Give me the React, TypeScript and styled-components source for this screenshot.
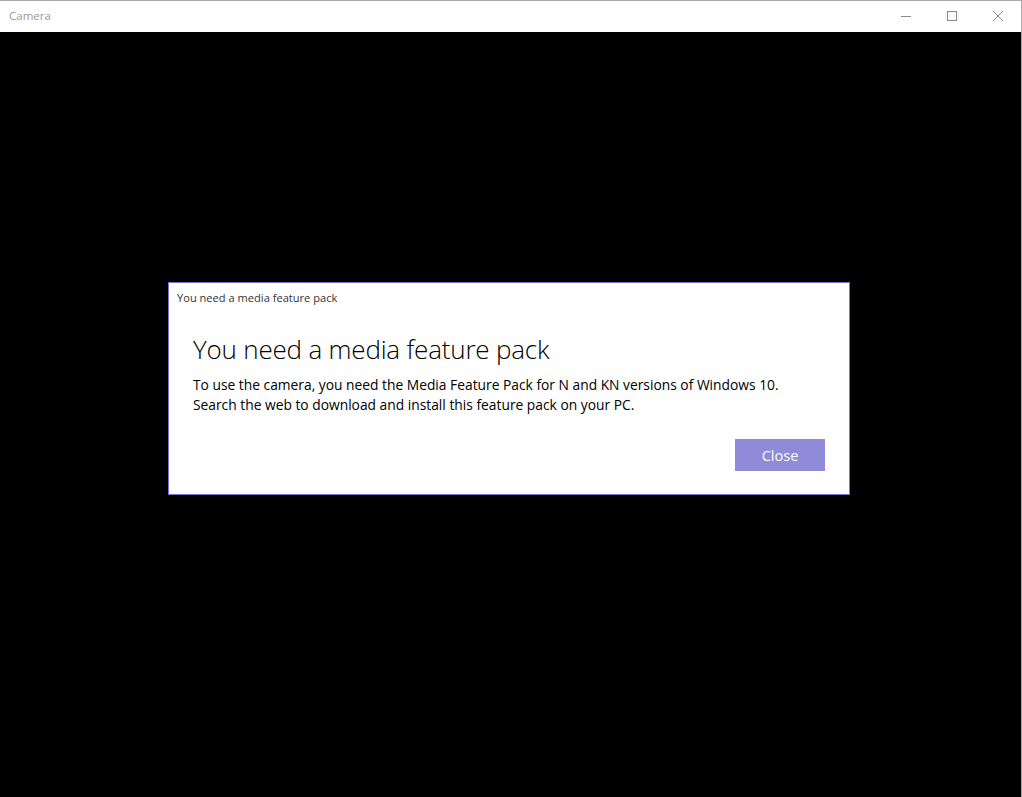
import React from 'react';
import styled, { createGlobalStyle } from 'styled-components';

const GlobalStyle = createGlobalStyle`
  html, body {
    margin: 0;
    padding: 0;
    background: #000;
  }
  body {
    font-family: 'Open Sans', 'Noto Sans', sans-serif;
  }
`;

const App: React.FC = () => {
  return (
    <>
      <GlobalStyle />
      <Window>
        <TitleBar>
          <AppTitle>Camera</AppTitle>
          <Controls>
            <ControlButton aria-label="Minimize">
              <svg width="10" height="10" viewBox="0 0 10 10">
                <line x1="0" y1="5.5" x2="10" y2="5.5" stroke="#8a8a8a" strokeWidth="1" />
              </svg>
            </ControlButton>
            <ControlButton aria-label="Maximize">
              <svg width="10" height="10" viewBox="0 0 10 10">
                <rect x="0.5" y="0.5" width="9" height="9" fill="none" stroke="#8a8a8a" strokeWidth="1" />
              </svg>
            </ControlButton>
            <ControlButton aria-label="Close">
              <svg width="10" height="10" viewBox="0 0 10 10">
                <path d="M0 0 L10 10 M10 0 L0 10" stroke="#8a8a8a" strokeWidth="1" />
              </svg>
            </ControlButton>
          </Controls>
        </TitleBar>
        <Content>
          <Dialog>
            <Caption>You need a media feature pack</Caption>
            <DialogBody>
              <Heading>You need a media feature pack</Heading>
              <Message>
                To use the camera, you need the Media Feature Pack for N and KN versions of Windows 10.
                <br />
                Search the web to download and install this feature pack on your PC.
              </Message>
              <Actions>
                <PrimaryButton>Close</PrimaryButton>
              </Actions>
            </DialogBody>
          </Dialog>
        </Content>
      </Window>
    </>
  );
};

const Window = styled.div`
  display: flex;
  flex-direction: column;
  width: 1022px;
  height: 797px;
  box-sizing: border-box;
  border-top: 1px solid #aaaaaa;
  border-right: 1px solid #aaaaaa;
  overflow: hidden;
`;

const TitleBar = styled.div`
  display: flex;
  align-items: center;
  justify-content: space-between;
  height: 31px;
  background: #ffffff;
  flex-shrink: 0;
`;

const AppTitle = styled.span`
  padding-left: 9px;
  font-family: 'Open Sans', sans-serif;
  font-size: 11.5px;
  color: #9a9a9a;
  margin-top: -2px;
`;

const Controls = styled.div`
  display: flex;
  height: 100%;
`;

const ControlButton = styled.div`
  display: flex;
  align-items: center;
  justify-content: center;
  width: 46px;
  height: 100%;
  padding-bottom: 1px;
  box-sizing: border-box;
`;

const Content = styled.div`
  flex: 1;
  background: #000000;
  display: flex;
  align-items: flex-start;
  padding: 250px 0 0 168px;
`;

const Dialog = styled.div`
  width: 682px;
  box-sizing: border-box;
  background: #ffffff;
  border: 1px solid #7873d6;
`;

const Caption = styled.div`
  height: 30px;
  line-height: 30px;
  padding-left: 8px;
  font-size: 11.1px;
  color: #333333;
`;

const DialogBody = styled.div`
  display: flex;
  flex-direction: column;
  padding: 20px 24px 23px 24px;
`;

const Heading = styled.h1`
  margin: 0;
  font-family: 'Open Sans', sans-serif;
  font-weight: 300;
  font-size: 26px;
  line-height: 32px;
  color: #000000;
  letter-spacing: -0.2px;
`;

const Message = styled.p`
  margin: 10px 0 0 0;
  font-family: 'Open Sans', sans-serif;
  font-size: 13.8px;
  line-height: 20px;
  color: #000000;
`;

const Actions = styled.div`
  display: flex;
  justify-content: flex-end;
  margin-top: 24px;
`;

const PrimaryButton = styled.button`
  width: 90px;
  height: 32px;
  border: none;
  background: #8f8bd8;
  color: #ffffff;
  font-family: 'Open Sans', sans-serif;
  font-size: 14.5px;
  padding: 0;
`;

export default App;
